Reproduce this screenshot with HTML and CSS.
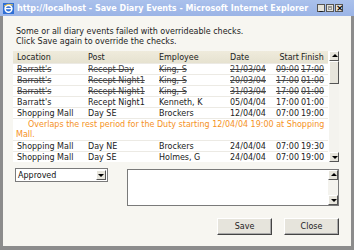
FILE: index.html
```html
<!DOCTYPE html>
<html lang="en">
<head>
  <meta charset="UTF-8">
  <title>Save Diary Events</title>
  <link rel="stylesheet" href="styles.css">
</head>
<body>

  <div class="window">
    <div class="titlebar">
      <svg class="ie-icon" width="11" height="11" viewBox="0 0 11 11">
        <rect x="0" y="0" width="11" height="11" fill="#2f6fd6"/>
        <circle cx="5.5" cy="5.8" r="3.4" fill="none" stroke="#fff" stroke-width="1.6"/>
        <path d="M2.5 5.6 H8.6" stroke="#fff" stroke-width="1.3"/>
        <path d="M1 3 Q5 0 10 2" stroke="#f2c94c" stroke-width="1" fill="none"/>
      </svg>
      <span class="title">http://localhost - Save Diary Events - Microsoft Internet Explorer</span>
      <div class="caption-buttons">
        <span class="cap-btn">_</span>
        <span class="cap-btn max"><i></i></span>
        <span class="cap-btn close">×</span>
      </div>
    </div>

    <div class="content">
      <p class="message">Some or all diary events failed with overrideable checks.<br>Click Save again to override the checks.</p>

      <div class="grid">
        <table class="events">
          <colgroup>
            <col style="width:71px"><col style="width:71px"><col style="width:71px">
            <col style="width:42px"><col style="width:31px"><col style="width:29px">
          </colgroup>
          <thead>
            <tr><th>Location</th><th>Post</th><th>Employee</th><th>Date</th><th class="num">Start</th><th class="fin">Finish</th></tr>
          </thead>
          <tbody>
            <tr class="done"><td>Barratt's</td><td>Recept Day</td><td>King, S</td><td>21/03/04</td><td class="num">09:00</td><td class="fin">17:00</td></tr>
            <tr class="done"><td>Barratt's</td><td>Recept Night1</td><td>King, S</td><td>20/03/04</td><td class="num">17:00</td><td class="fin">01:00</td></tr>
            <tr class="done"><td>Barratt's</td><td>Recept Night1</td><td>King, S</td><td>31/03/04</td><td class="num">17:00</td><td class="fin">01:00</td></tr>
            <tr><td>Barratt's</td><td>Recept Night1</td><td>Kenneth, K</td><td>05/04/04</td><td class="num">17:00</td><td class="fin">01:00</td></tr>
            <tr><td>Shopping Mall</td><td>Day SE</td><td>Brockers</td><td>12/04/04</td><td class="num">07:00</td><td class="fin">19:00</td></tr>
            <tr class="warning"><td colspan="6">Overlaps the rest period for the Duty starting 12/04/04 19:00 at Shopping Mall.</td></tr>
            <tr><td>Shopping Mall</td><td>Day NE</td><td>Brockers</td><td>24/04/04</td><td class="num">07:00</td><td class="fin">19:30</td></tr>
            <tr><td>Shopping Mall</td><td>Day SE</td><td>Holmes, G</td><td>24/04/04</td><td class="num">07:00</td><td class="fin">19:00</td></tr>
          </tbody>
        </table>
        <div class="scrollbar">
          <div class="arrow up"></div>
          <div class="thumb"></div>
          <div class="track"></div>
          <div class="arrow down"></div>
        </div>
      </div>

      <div class="edit-row">
        <div class="select">
          <span class="select-text">Approved</span>
          <span class="select-btn"></span>
        </div>
        <div class="notes">
          <div class="notes-text"></div>
          <div class="scrollbar small">
            <div class="arrow up"></div>
            <div class="track"></div>
            <div class="arrow down"></div>
          </div>
        </div>
      </div>

      <div class="actions">
        <button class="btn">Save</button>
        <button class="btn">Close</button>
      </div>
    </div>
  </div>

</body>
</html>
```

FILE: styles.css
```css
body { margin: 0; font-family: "DejaVu Sans", Verdana, sans-serif; font-size: 8px; color: #333; }
.window { width: 354px; height: 250px; box-sizing: border-box; background: #f7f6f1; border: 3px solid #8c8c8c; border-top: none; border-bottom-width: 4px; display: flex; flex-direction: column; }
.titlebar { height: 16px; margin: 0 -3px; padding: 0 3px; display: flex; align-items: center; background: linear-gradient(#aac1ec, #9bb4e6); }
.ie-icon { margin-right: 3px; flex: none; }
.title { color: #fff; font-weight: bold; font-size: 8px; white-space: nowrap; flex: 1; }
.caption-buttons { display: flex; gap: 1px; margin-right: 8px; }
.cap-btn { width: 8px; height: 8px; box-sizing: border-box; background: #e4e2da; border: 1px solid #555; font-size: 7px; line-height: 6px; text-align: center; color: #000; font-weight: bold; }
.cap-btn.max i { display: block; margin: 1px; height: 4px; border: 1px solid #999; border-top-width: 2px; box-sizing: border-box; }
.cap-btn.close { font-size: 9px; line-height: 6px; }
.content { padding: 11px 12px 0 10px; flex: 1; display: flex; flex-direction: column; }
.message { margin: 0 0 4px 3px; line-height: 10px; color: #222; }
.grid { display: flex; height: 111px; background: #fff; }
.events { width: 315px; table-layout: fixed; border-collapse: collapse; align-self: flex-start; }
.events th { height: 12px; padding: 0 0 0 4px; background: linear-gradient(#efebdc, #e6e2d0); font-weight: normal; text-align: left; color: #222; }
.events td { height: 11px; padding: 0 0 0 4px; border-top: 1px solid #eceae4; white-space: nowrap; overflow: hidden; color: #222; box-sizing: border-box; }
.events .num { text-align: right; padding: 0; }
.events .fin { padding-left: 2px; }
.events .done td { text-decoration: line-through; color: #444; }
.events .warning td { color: #f5921e; white-space: normal; line-height: 10px; text-indent: 12px; padding: 1px 0 0 3px; }
.scrollbar { width: 10px; margin-left: 1px; display: flex; flex-direction: column; background: #f4f3ee; }
.scrollbar .arrow { height: 8px; flex: none; background: #e7e5dc; border: 1px solid; border-color: #fff #555 #555 #fff; position: relative; }
.scrollbar .arrow::after { content: ""; position: absolute; left: 2px; border-left: 3px solid transparent; border-right: 3px solid transparent; }
.scrollbar .arrow.up::after { top: 2px; border-bottom: 3px solid #000; }
.scrollbar .arrow.down::after { top: 3px; border-top: 3px solid #000; }
.scrollbar .thumb { height: 21px; flex: none; background: #e7e5dc; border: 1px solid; border-color: #fff #555 #555 #fff; }
.scrollbar .track { flex: 1; }
.edit-row { display: flex; align-items: flex-start; margin-top: 6px; }
.select { width: 93px; height: 14px; box-sizing: border-box; margin-left: 2px; background: #fff; border: 1px solid #7a7a7a; display: flex; align-items: center; }
.select-text { flex: 1; padding-left: 2px; font-size: 8px; color: #111; }
.select-btn { width: 10px; height: 10px; margin-right: 1px; box-sizing: border-box; background: #e7e5dc; border: 1px solid; border-color: #fff #555 #555 #fff; position: relative; }
.select-btn::after { content: ""; position: absolute; left: 1px; top: 3px; border-left: 3px solid transparent; border-right: 3px solid transparent; border-top: 3px solid #000; }
.notes { margin-left: 19px; flex: 1; height: 37px; margin-top: 1px; box-sizing: border-box; background: #fff; border: 1px solid #7a7a7a; display: flex; }
.notes-text { flex: 1; }
.scrollbar.small { margin: 0; }
.actions { display: flex; justify-content: flex-end; gap: 12px; margin-top: 12px; }
.btn { width: 55px; height: 17px; padding: 0; font-family: "DejaVu Sans", Verdana, sans-serif; font-size: 8px; color: #222; background: #e6e4dc; border: 1px solid; border-color: #fff #444 #444 #fff; box-shadow: inset -1px -1px 0 #aaa; }
```
